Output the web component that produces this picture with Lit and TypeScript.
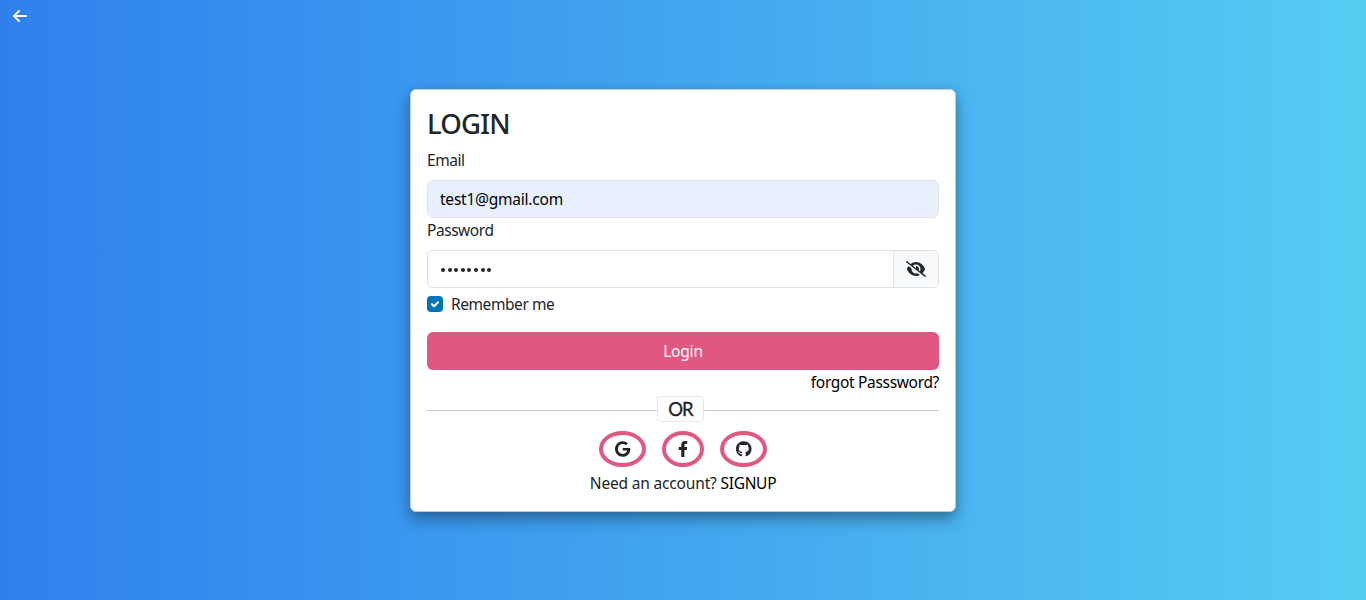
import { LitElement, html, css, svg } from "lit";
import { customElement, property } from "lit/decorators.js";

interface Glyph { box: string; d: string }

const glyphs: Record<string, Glyph> = {
  back: {
    box: "0 0 448 512",
    d: "M9.4 233.4c-12.5 12.5-12.5 32.8 0 45.3l160 160c12.5 12.5 32.8 12.5 45.3 0s12.5-32.8 0-45.3L109.2 288 416 288c17.7 0 32-14.3 32-32s-14.3-32-32-32l-306.7 0L214.6 118.6c12.5-12.5 12.5-32.8 0-45.3s-32.8-12.5-45.3 0l-160 160z",
  },
  hidden: {
    box: "0 0 640 512",
    d: "M38.8 5.1C28.4-3.1 13.3-1.2 5.1 9.2S-1.2 34.7 9.2 42.9l592 464c10.4 8.2 25.5 6.3 33.7-4.1s6.3-25.5-4.1-33.7L525.6 386.7c39.6-40.6 66.4-86.1 79.9-118.4c3.3-7.9 3.3-16.7 0-24.6c-14.9-35.7-46.2-87.7-93-131.1C465.5 68.8 400.8 32 320 32c-68.2 0-125 26.3-169.3 60.8L38.8 5.1zM223.1 149.5C248.6 126.2 282.7 112 320 112c79.5 0 144 64.5 144 144c0 24.9-6.3 48.3-17.4 68.7L408 294.5c8.4-19.3 10.6-41.4 4.8-63.3c-11.1-41.5-47.8-69.4-88.6-71.1c-5.8-.2-9.2 6.1-7.4 11.7c2.1 6.4 3.3 13.2 3.3 20.3c0 10.2-2.4 19.8-6.6 28.3l-90.3-70.8zM373 389.9c-16.4 6.5-34.3 10.1-53 10.1c-79.5 0-144-64.5-144-144c0-6.9 .5-13.6 1.4-20.2L83.1 161.5C60.3 191.2 44 220.8 34.5 243.7c-3.3 7.9-3.3 16.7 0 24.6c14.9 35.7 46.2 87.7 93 131.1C174.5 443.2 239.2 480 320 480c47.8 0 89.9-12.9 126.2-32.5L373 389.9z",
  },
  google: {
    box: "0 0 488 512",
    d: "M488 261.8C488 403.3 391.1 504 248 504 110.8 504 0 393.2 0 256S110.8 8 248 8c66.8 0 123 24.5 166.3 64.9l-67.5 64.9C258.5 52.6 94.3 116.6 94.3 256c0 86.5 69.1 156.6 153.7 156.6 98.2 0 135-70.4 140.8-106.9H248v-85.3h236.1c2.3 12.7 3.9 24.9 3.9 41.4z",
  },
  facebook: {
    box: "0 0 320 512",
    d: "M279.14 288l14.22-92.66h-88.91v-60.13c0-25.35 12.42-50.06 52.24-50.06h40.42V6.26S260.43 0 225.36 0c-73.22 0-121.08 44.38-121.08 124.72v70.62H22.89V288h81.39v224h100.17V288z",
  },
  github: {
    box: "0 0 496 512",
    d: "M165.9 397.4c0 2-2.3 3.6-5.2 3.6-3.3.3-5.6-1.3-5.6-3.6 0-2 2.3-3.6 5.2-3.6 3-.3 5.6 1.3 5.6 3.6zm-31.1-4.5c-.7 2 1.3 4.3 4.3 4.9 2.6 1 5.6 0 6.2-2s-1.3-4.3-4.3-5.2c-2.6-.7-5.5.3-6.2 2.3zm44.2-1.7c-2.9.7-4.9 2.6-4.6 4.9.3 2 2.9 3.3 5.9 2.6 2.9-.7 4.9-2.6 4.6-4.6-.3-1.9-3-3.2-5.9-2.9zM244.8 8C106.1 8 0 113.3 0 252c0 110.9 69.8 205.8 169.5 239.2 12.8 2.3 17.3-5.6 17.3-12.1 0-6.2-.3-40.4-.3-61.4 0 0-70 15-84.7-29.8 0 0-11.4-29.1-27.8-36.6 0 0-22.9-15.7 1.6-15.4 0 0 24.9 2 38.6 25.8 21.9 38.6 58.6 27.5 72.9 20.9 2.3-16 8.8-27.1 16-33.7-55.9-6.2-112.3-14.3-112.3-110.5 0-27.5 7.6-41.3 23.6-58.9-2.6-6.5-11.1-33.3 2.6-67.9 20.9-6.5 69 27 69 27 20-5.6 41.5-8.5 62.8-8.5s42.8 2.9 62.8 8.5c0 0 48.1-33.6 69-27 13.7 34.7 5.2 61.4 2.6 67.9 16 17.7 25.8 31.5 25.8 58.9 0 96.5-58.9 104.2-114.8 110.5 9.2 7.9 17 22.9 17 46.4 0 33.7-.3 75.4-.3 83.6 0 6.5 4.6 14.4 17.3 12.1C428.2 457.8 496 362.9 496 252 496 113.3 383.5 8 244.8 8z",
  },
  check: {
    box: "0 0 20 20",
    d: "M6.2 10.2l2.6 2.6 5-5",
  },
};

@customElement("app-icon")
export class AppIcon extends LitElement {
  @property() name = "";

  static styles = css`
    :host { display: inline-flex; height: 16px; }
    svg { height: 100%; width: auto; display: block; overflow: visible; }
    .solid { fill: currentColor; }
    .line { fill: none; stroke: currentColor; stroke-width: 2.6; stroke-linecap: round; stroke-linejoin: round; }
  `;

  render() {
    const g = glyphs[this.name];
    return html`<svg viewBox=${g.box} aria-hidden="true">
      ${svg`<path class=${this.name === "check" ? "line" : "solid"} d=${g.d}></path>`}
    </svg>`;
  }
}

@customElement("app-root")
export class AppRoot extends LitElement {
  static styles = css`
    :host {
      display: block;
      height: 600px;
      overflow: hidden;
      background: linear-gradient(to right, #2f80ed, #56ccf2);
      font: 400 15.5px/24px "Noto Sans", "Open Sans", sans-serif;
      color: #212529;
    }
    * { box-sizing: border-box; }
    .page { height: 100%; display: grid; grid-template-rows: 32px 1fr; }
    .bar { display: flex; align-items: flex-start; padding: 8px 0 0 13px; color: #fff; }
    .stage { padding-top: 57px; }
    .card {
      width: 546px;
      height: 423px;
      margin: 0 auto;
      padding: 16px;
      border: 1px solid #c8ccd0;
      border-radius: 6px;
      background: #fff;
      box-shadow: 0 8px 16px rgba(0, 0, 0, 0.3), 0 2px 10px rgba(0, 0, 0, 0.12);
      display: flex;
      flex-direction: column;
    }
    h3 { margin: 0 0 8px; padding-top: 1px; font-size: 27.5px; font-weight: 500; line-height: 33px; letter-spacing: -0.8px; }
    .label { height: 24px; margin-bottom: 8px; letter-spacing: -0.45px; }
    .field {
      height: 38px;
      flex: none;
      display: flex;
      border: 1px solid #dee2e6;
      border-radius: 6px;
      overflow: hidden;
    }
    .value { flex: 1; padding: 6px 12px; }
    .filled { background: #e8f0fe; color: #000; letter-spacing: -0.23px; }
    .dots { display: flex; align-items: center; gap: 2.5px; padding: 2px 13px 0; }
    .dot { width: 4.1px; height: 4.1px; border-radius: 50%; background: #212529; }
    .toggle {
      width: 45px;
      border-left: 1px solid #dee2e6;
      background: #f8f9fa;
      display: flex;
      align-items: center;
      justify-content: center;
    }
    .remember { display: flex; align-items: center; gap: 8px; height: 24px; margin: 4px 0 16px; letter-spacing: -0.42px; }
    .check { display: flex; width: 16px; height: 16px; border-radius: 4px; background: #0075b5; color: #fff; }
    .submit {
      height: 38px;
      flex: none;
      border-radius: 6px;
      background: #e0587f;
      color: #fff;
      text-align: center;
      line-height: 38px;
      letter-spacing: -0.2px;
    }
    .forgot { height: 24px; text-align: right; color: #000; letter-spacing: -0.33px; }
    .divider { display: flex; align-items: center; height: 26px; margin-top: 2px; }
    .rule { height: 1px; background: #c7c8c9; margin-top: 3px; }
    .left { width: 230px; }
    .right { flex: 1; }
    .or {
      width: 47px;
      height: 26px;
      border: 1px solid #f1e4e8;
      border-radius: 4px;
      text-align: center;
      font: 400 18.5px/24px Lato, sans-serif;
      letter-spacing: -1px;
      -webkit-text-stroke: 0.3px currentColor;
    }
    .social { display: flex; justify-content: center; gap: 16px; margin-top: 9px; height: 36px; }
    .ring {
      width: 47px;
      border: 4px solid #e0587f;
      border-radius: 50%;
      display: flex;
      align-items: center;
      justify-content: center;
    }
    .narrow { width: 42px; }
    .signup { text-align: center; margin-top: 4px; letter-spacing: -0.17px; }
    .link { color: #000; letter-spacing: -0.3px; }
  `;

  render() {
    return html`
      <div class="page">
        <div class="bar"><app-icon name="back"></app-icon></div>
        <div class="stage">
          <div class="card">
            <h3>LOGIN</h3>
            <div class="label">Email</div>
            <div class="field"><div class="value filled">test1@gmail.com</div></div>
            <div class="label">Password</div>
            <div class="field">
              <div class="value dots">${Array.from({ length: 8 }, () => html`<span class="dot"></span>`)}</div>
              <div class="toggle"><app-icon name="hidden"></app-icon></div>
            </div>
            <div class="remember">
              <span class="check"><app-icon name="check"></app-icon></span>
              <span>Remember me</span>
            </div>
            <div class="submit">Login</div>
            <div class="forgot">forgot Passsword?</div>
            <div class="divider">
              <div class="rule left"></div>
              <div class="or">OR</div>
              <div class="rule right"></div>
            </div>
            <div class="social">
              <div class="ring"><app-icon name="google"></app-icon></div>
              <div class="ring narrow"><app-icon name="facebook"></app-icon></div>
              <div class="ring"><app-icon name="github"></app-icon></div>
            </div>
            <div class="signup">Need an account? <span class="link">SIGNUP</span></div>
          </div>
        </div>
      </div>
    `;
  }
}
